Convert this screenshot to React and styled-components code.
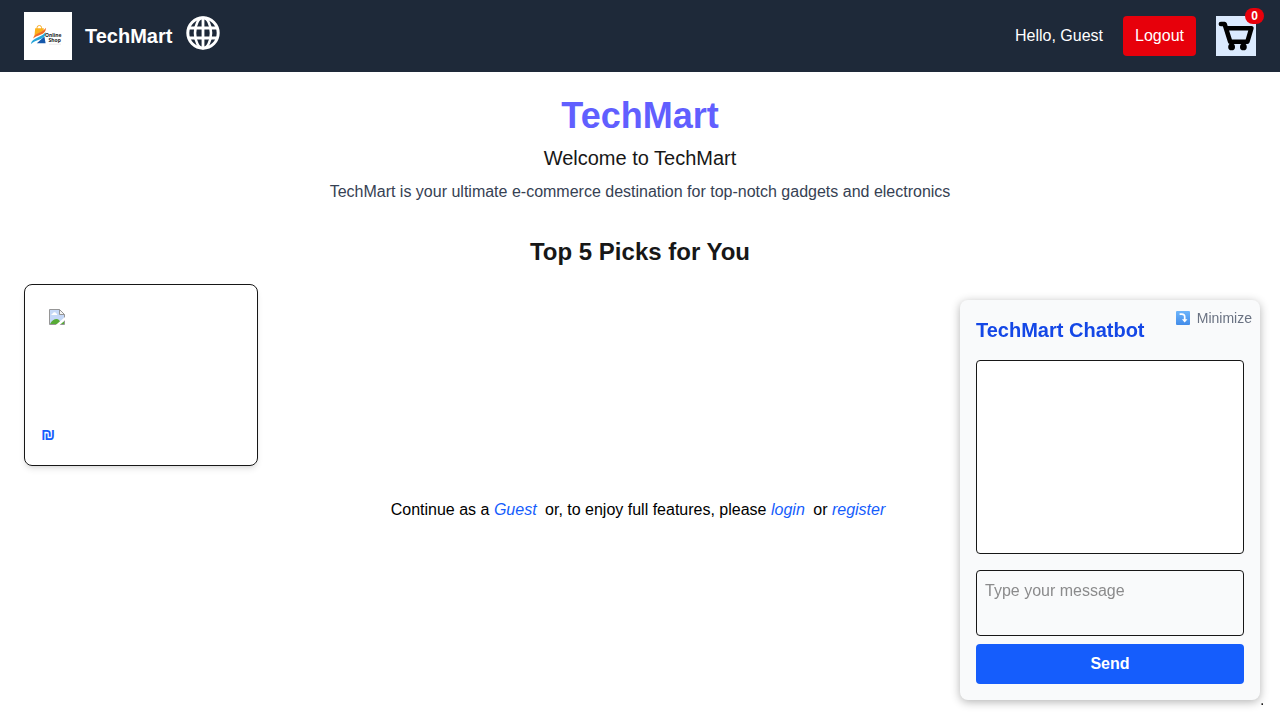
import React from "react";
import styled, { createGlobalStyle } from "styled-components";

const GlobalStyle = createGlobalStyle`
  *, *::before, *::after { box-sizing: border-box; }
  body {
    margin: 0;
    background: #ffffff;
    color: #171717;
    font-family: "Liberation Sans", Arial, Helvetica, sans-serif;
    font-size: 16px;
    line-height: 24px;
  }
  h1, h2, h3, p { margin: 0; }
  button, textarea { font: inherit; }
  svg { display: block; }
`;

const Header = styled.header`
  display: flex;
  align-items: center;
  justify-content: space-between;
  padding: 12px 24px;
  background: #1e2939;
  color: #ffffff;
`;

const Brand = styled.div`
  display: flex;
  align-items: center;
  gap: 13px;
`;

const BrandName = styled.span`
  font-size: 20px;
  line-height: 28px;
  font-weight: 700;
`;

const IconButton = styled.button`
  position: relative;
  padding: 0;
  border: 0;
  background: transparent;
  color: inherit;
  cursor: pointer;
`;

const GlobeButton = styled(IconButton)`
  padding-bottom: 6px;
`;

const Account = styled.div`
  display: flex;
  align-items: center;
  gap: 20px;
`;

const LogoutButton = styled.button`
  padding: 8px 12px;
  border: 0;
  border-radius: 4px;
  background: #e7000b;
  color: #ffffff;
  cursor: pointer;
`;

const CartButton = styled(IconButton)`
  background: #dbeafe;
`;

const Badge = styled.span`
  position: absolute;
  top: -8px;
  right: -8px;
  padding: 0 6px;
  border-radius: 999px;
  background: #e7000b;
  color: #ffffff;
  font-size: 12px;
  line-height: 16px;
  font-weight: 700;
`;

const Main = styled.main`
  padding: 24px;
`;

const Hero = styled.section`
  display: flex;
  flex-direction: column;
  gap: 8px;
  text-align: center;
`;

const Title = styled.h1`
  color: #615fff;
  font-size: 36px;
  line-height: 40px;
  font-weight: 700;
`;

const Welcome = styled.p`
  font-size: 20px;
  line-height: 28px;
`;

const Description = styled.p`
  color: #364153;
`;

const SectionTitle = styled.h2`
  margin: 32px 0 16px;
  font-size: 24px;
  line-height: 32px;
  font-weight: 700;
  text-align: center;
`;

const Products = styled.div`
  display: grid;
  grid-template-columns: repeat(5, minmax(0, 1fr));
  gap: 16px;
`;

const ProductCard = styled.article`
  padding: 16px;
  border: 1px solid #171717;
  border-radius: 8px;
  box-shadow: 0 4px 6px -1px rgba(0, 0, 0, 0.1), 0 2px 4px -2px rgba(0, 0, 0, 0.1);
`;

const ProductImage = styled.div`
  height: 112px;
  margin-bottom: 8px;
  padding: 8px;
`;

const Price = styled.p`
  color: #155dfc;
  line-height: 28px;
  font-weight: 700;
`;

const GuestNote = styled.p`
  margin-top: 32px;
  text-align: center;
  color: #000000;
`;

const NoteLink = styled.a`
  margin-right: 4px;
  color: #155dfc;
  font-style: italic;
  text-decoration: none;
`;

const ChatPanel = styled.aside`
  position: fixed;
  right: 20px;
  bottom: 20px;
  width: 300px;
  padding: 16px;
  border-radius: 8px;
  background: #f9fafb;
  box-shadow: 0 2px 10px rgba(0, 0, 0, 0.3);
`;

const ChatTitle = styled.h3`
  margin-bottom: 16px;
  color: #1447e6;
  font-size: 20px;
  line-height: 28px;
  font-weight: 700;
`;

const MinimizeButton = styled.button`
  position: absolute;
  top: 8px;
  right: 8px;
  display: flex;
  align-items: center;
  gap: 7px;
  padding: 0;
  border: 0;
  background: transparent;
  color: #6a7282;
  font-size: 14px;
  line-height: 20px;
  cursor: pointer;
`;

const Messages = styled.div`
  height: 194px;
  margin-bottom: 16px;
  border: 1px solid #171717;
  border-radius: 4px;
  background: #ffffff;
  overflow-y: auto;
`;

const MessageForm = styled.form`
  display: flex;
  flex-direction: column;
  gap: 8px;
`;

const MessageInput = styled.textarea`
  display: block;
  width: 100%;
  height: 66px;
  padding: 8px;
  border: 1px solid #171717;
  border-radius: 4px;
  background: transparent;
  color: #171717;
  resize: none;
  &::placeholder { color: #8b8b8c; opacity: 1; }
`;

const SendButton = styled.button`
  padding: 8px;
  border: 0;
  border-radius: 4px;
  background: #155dfc;
  color: #ffffff;
  font-weight: 700;
  cursor: pointer;
`;

const PanelDot = styled.span`
  position: absolute;
  top: 100%;
  left: 100%;
  color: #171717;
  line-height: 0;
`;

const ShopLogo = () => (
  <svg width="48" height="48" viewBox="0 0 48 48" role="img" aria-label="Online Shop">
    <rect width="48" height="48" fill="#fff" />
    <path d="M13 17v-1.2a2.3 2.3 0 0 1 4.6 0V17" fill="none" stroke="#f4a51c" strokeWidth="0.9" />
    <path d="M11.2 16.3h8.6l-.2 2.2-9.2 6z" fill="#fbb11b" />
    <path d="M12.8 31.2 20.4 24.6l1.2 6.6z" fill="#1558ab" />
    <path d="M9.4 26.6c-.2-2.4 1.6-3.8 4.4-5.2 3.4-1.7 6.6-3 8-5.6.3 3.6-1.6 5.4-4.8 6.8-3 1.3-6 2.2-7.6 4z" fill="#f26a25" />
    <path d="M7.2 32c-.2-2.8 2-4.2 5-5.8 3.2-1.7 7-2.8 9.4-6 .2 3.6-2 5.6-5.4 7-3.4 1.5-7.2 2.4-9 4.8z" fill="#25a5d8" />
    <g fill="#17191d" fontFamily="'Noto Sans', sans-serif" fontWeight="700" fontSize="5">
      <text x="21" y="25.4">Online</text>
      <text x="24.6" y="30.2">Shop</text>
    </g>
    <path d="M25 32.2h12" stroke="#d4d4d4" strokeWidth="0.5" />
  </svg>
);

const GlobeIcon = () => (
  <svg width="36" height="36" viewBox="0 0 36 36" fill="none" stroke="#fff" strokeWidth="3" aria-hidden="true">
    <circle cx="18" cy="18" r="15.2" />
    <ellipse cx="18" cy="18" rx="8" ry="15.2" strokeWidth="2.6" />
    <path d="M18 3v30M4 13h28M4 23h28" strokeWidth="2.8" />
  </svg>
);

const CartIcon = () => (
  <svg width="40" height="40" viewBox="0 0 40 40" aria-hidden="true">
    <path d="M4.9 8h3.7l5.6 17.7h17.2l4-13.5H10.6" fill="none" stroke="#000" strokeWidth="4.6" strokeLinecap="round" strokeLinejoin="round" />
    <circle cx="15.6" cy="30.9" r="3.4" />
    <circle cx="27.4" cy="30.9" r="3.4" />
  </svg>
);

const MissingImageIcon = () => (
  <svg width="16" height="16" viewBox="0 0 16 16" role="img" aria-label="Product image unavailable">
    <path d="M.5.5h10l5 5v10H.5z" fill="#c5d8f7" />
    <path d="M2.5 6a1.3 1.3 0 0 1 1.3-1.6 1.9 1.9 0 0 1 3.5 0A1.2 1.2 0 0 1 8.2 6z" fill="#fff" />
    <path d="M1 15c1.7-3.3 4.2-5 6.6-5 2 0 3.4 1.6 4.6 5zM11.4 15l3.6-3v3z" fill="#57ab36" />
    <path d="M10.5.5v5h5z" fill="#f4f4f4" />
    <path d="M.5 15.5V.5h10l5 5v10z" fill="none" stroke="#969696" />
    <path d="M10.5.5v5h5" fill="none" stroke="#969696" />
    <path d="M6.5 16.2 16.3 7.8v3.2l-5.9 5.2z" fill="#fff" />
  </svg>
);

const ArrowDownIcon = () => (
  <svg width="14" height="14" viewBox="0 0 14 14" aria-hidden="true">
    <defs>
      <linearGradient id="arrowTile" x1="0" y1="0" x2="0" y2="1">
        <stop offset="0" stopColor="#6db5fb" />
        <stop offset="1" stopColor="#438ce9" />
      </linearGradient>
    </defs>
    <rect width="14" height="14" rx="1" fill="url(#arrowTile)" />
    <path d="M3.6 3.2h2.2c2.1 0 2.9.8 2.9 2.7v3" fill="none" stroke="#fff" strokeWidth="1.7" />
    <path d="M5.9 8.2h5.6L8.7 11.4z" fill="#fff" />
  </svg>
);

export default function App() {
  return (
    <>
      <GlobalStyle />
      <Header>
        <Brand>
          <ShopLogo />
          <BrandName>TechMart</BrandName>
          <GlobeButton type="button" aria-label="Change language">
            <GlobeIcon />
          </GlobeButton>
        </Brand>
        <Account>
          <span>Hello, Guest</span>
          <LogoutButton type="button">Logout</LogoutButton>
          <CartButton type="button" aria-label="Shopping cart">
            <CartIcon />
            <Badge>0</Badge>
          </CartButton>
        </Account>
      </Header>
      <Main>
        <Hero>
          <Title>TechMart</Title>
          <Welcome>Welcome to TechMart</Welcome>
          <Description>
            TechMart is your ultimate e-commerce destination for top-notch gadgets and electronics
          </Description>
        </Hero>
        <SectionTitle>Top 5 Picks for You</SectionTitle>
        <Products>
          <ProductCard>
            <ProductImage>
              <MissingImageIcon />
            </ProductImage>
            <Price>₪</Price>
          </ProductCard>
        </Products>
        <GuestNote>
          Continue as a <NoteLink href="#guest">Guest</NoteLink> or, to enjoy full features, please{" "}
          <NoteLink href="#login">login</NoteLink> or <NoteLink href="#register">register</NoteLink>
        </GuestNote>
      </Main>
      <ChatPanel>
        <ChatTitle>TechMart Chatbot</ChatTitle>
        <MinimizeButton type="button">
          <ArrowDownIcon />
          Minimize
        </MinimizeButton>
        <Messages role="log" aria-label="Messages" />
        <MessageForm onSubmit={(event) => event.preventDefault()}>
          <MessageInput aria-label="Type your message" placeholder="Type your message" />
          <SendButton type="submit">Send</SendButton>
        </MessageForm>
        <PanelDot>.</PanelDot>
      </ChatPanel>
    </>
  );
}
